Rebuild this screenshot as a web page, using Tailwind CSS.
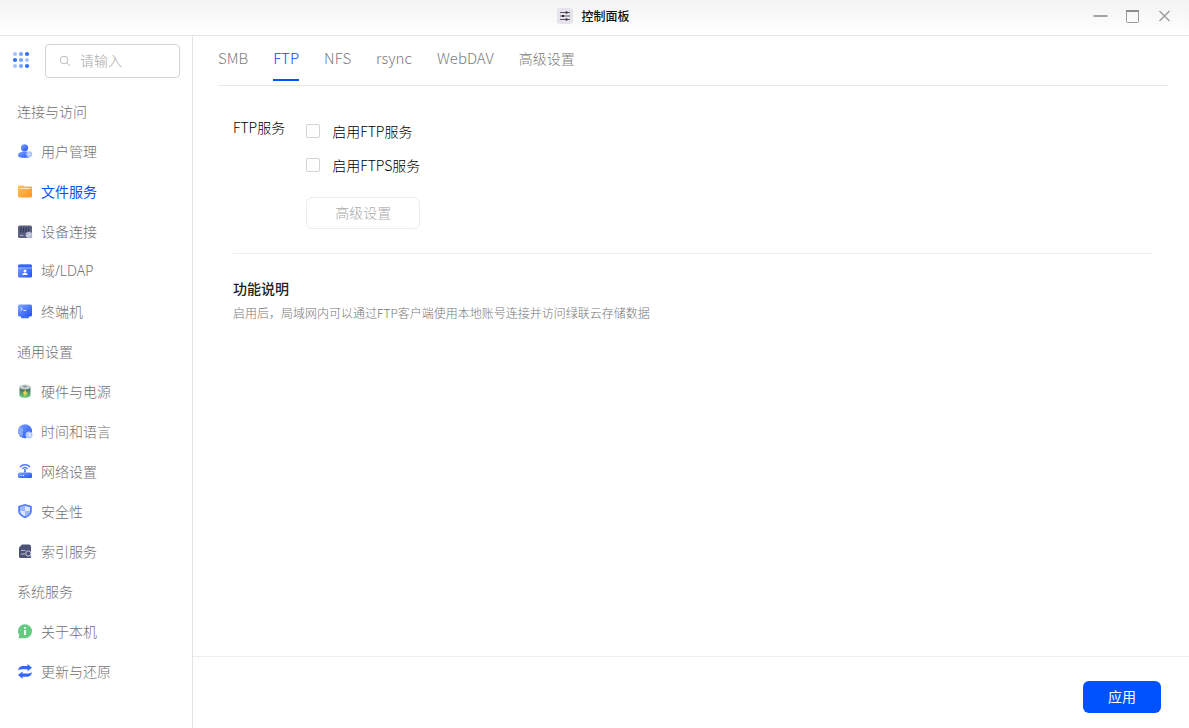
<!DOCTYPE html>
<html lang="zh-CN">
<head>
  <meta charset="UTF-8" />
  <meta name="viewport" content="width=device-width, initial-scale=1.0"/>
  <title>控制面板</title>
  <script src="https://cdn.jsdelivr.net/npm/@tailwindcss/browser@4"></script>
</head>
<body class="h-screen flex flex-col overflow-hidden bg-white font-['Noto_Sans_CJK_SC',sans-serif] font-light text-sm text-black">
  <!-- Gradientes dos ícones -->
  <svg class="absolute w-0 h-0" aria-hidden="true">
    <defs>
      <linearGradient id="blue" x1="0" y1="0" x2="1" y2="1"><stop offset="0" stop-color="#7fa8ff"/><stop offset="1" stop-color="#1f4dff"/></linearGradient>
      <linearGradient id="orange" x1="0" y1="0" x2="1" y2="1"><stop offset="0" stop-color="#ffc05a"/><stop offset="1" stop-color="#ff9420"/></linearGradient>
      <linearGradient id="green" x1="0" y1="0" x2="0" y2="1"><stop offset="0" stop-color="#3c5a60"/><stop offset="1" stop-color="#6fd07a"/></linearGradient>
    </defs>
  </svg>

  <header class="h-9 shrink-0 grid grid-cols-3 items-center border-b border-[#e4e4e4] bg-linear-to-b from-[#f3f3f3] to-white">
    <span></span>
    <div class="flex items-center justify-center gap-2 pb-1 pr-0.5">
      <svg class="w-4 h-4" viewBox="0 0 16 16"><rect width="16" height="16" rx="3" fill="#e6e4ea"/><path d="M3 4.500h10M3 8h10M3 11.500h10" stroke="#5a5767"/><path d="M9.500 3.500v2M6 7v2M9.500 10.500v2" stroke="#2b2838" stroke-width="2"/></svg>
      <h1 class="text-xs font-medium text-[#111]">控制面板</h1>
    </div>
    <div class="flex justify-end gap-4 pb-1 pr-[17px]">
      <button aria-label="最小化"><svg class="w-4 h-4" viewBox="0 0 16 16"><path d="M1.500 8h14" stroke="#a3a3a3" stroke-width="2"/></svg></button>
      <button aria-label="最大化"><svg class="w-4 h-4" viewBox="0 0 16 16" fill="none"><rect x="2.500" y="2.500" width="12" height="12" rx="1" stroke="#999"/><path d="M2 3h13" stroke="#8c8c8c" stroke-width="2"/></svg></button>
      <button aria-label="关闭"><svg class="w-4 h-4" viewBox="0 0 16 16"><path d="M3.500 3l10 10M13.500 3l-10 10" stroke="#999" stroke-width="1.300"/></svg></button>
    </div>
  </header>

  <div class="flex flex-1 min-h-0">
    <!-- Menu lateral -->
    <aside class="w-[193px] shrink-0 border-r border-[#e4e4e4] pt-2 text-[#707070]">
      <div class="flex items-center gap-4 px-3 mb-[13px]">
        <button aria-label="全部应用" class="w-[17px] shrink-0 pb-0.5">
          <svg class="w-[18px] h-[18px]" viewBox="0 0 18 18"><g fill="#2f70ff"><circle cx="15" cy="3" r="2.100"/><circle cx="3" cy="9" r="2.100"/><circle cx="15" cy="15" r="2.100"/></g><g fill="#77a3ff"><circle cx="9" cy="3" r="2.100"/><circle cx="9" cy="9" r="2.100"/><circle cx="9" cy="15" r="2.100"/></g><g fill="#a9c5ff"><circle cx="3" cy="3" r="2.100"/><circle cx="15" cy="9" r="2.100"/><circle cx="3" cy="15" r="2.100"/></g></svg>
        </button>
        <label class="flex items-center gap-[7px] flex-1 min-w-0 h-[34px] border border-[#d4d4d4] rounded px-[11px] pb-0.5">
          <svg class="w-4 h-4 shrink-0" viewBox="0 0 16 16" fill="none" stroke="#bbb"><circle cx="7" cy="8" r="3.800"/><path d="M10 11l3 3"/></svg>
          <input type="search" aria-label="搜索" placeholder="请输入" class="w-full min-w-0 outline-none placeholder:text-[#aaa]">
        </label>
      </div>
      <nav class="leading-10">
        <h2 class="pl-[17px]">连接与访问</h2>
        <a href="#" class="flex items-center gap-2 pl-[17px]"><svg class="w-4 h-4" viewBox="0 0 16 16"><circle cx="7.500" cy="4.800" r="3.600" fill="url(#blue)"/><path d="M1 12.500c0-3 3-4 6.500-4s6.500 1 6.500 4c0 1.500-3 2.300-6.500 2.300S1 14 1 12.500z" fill="url(#blue)"/><circle cx="12.200" cy="11.200" r="3" fill="#a9c2ff"/><circle cx="12.200" cy="11.200" r="1" fill="#e9f0ff"/></svg>用户管理</a>
        <a href="#" aria-current="page" class="flex items-center gap-2 pl-[17px] font-normal text-[#0052ff]"><svg class="w-4 h-4" viewBox="0 0 16 16"><path d="M1 3.500a1 1 0 011-1h4l1.500 1H14a1 1 0 011 1V13a1.500 1.500 0 01-1.500 1.500h-11A1.500 1.500 0 011 13z" fill="url(#orange)"/><path d="M2.500 5.500h11" stroke="#ffe6c0" stroke-width="1"/></svg>文件服务</a>
        <a href="#" class="flex items-center gap-2 pl-[17px]"><svg class="w-4 h-4" viewBox="0 0 16 16"><rect x="1" y="2.500" width="14" height="12.500" rx="1.500" fill="#5a6080"/><path d="M4 4.500v5M6.500 4.500v5M9 4.500v5M11.500 4.500v4" stroke="#343a58" stroke-width="1.300"/><path d="M2.500 12.500h4" stroke="#9da3bd"/><circle cx="12" cy="12" r="3.300" fill="#b4bad0"/><path d="M10.500 13.500l3-3" stroke="#eef0f6"/></svg>设备连接</a>
        <a href="#" class="flex items-center gap-2 pl-[17px] font-['Noto_Sans','Noto_Sans_CJK_SC',sans-serif]"><svg class="w-4 h-4" viewBox="0 0 16 16"><rect x="1" y="1.500" width="14" height="13" rx="1.500" fill="url(#blue)"/><path d="M1 3a1.500 1.500 0 011.500-1.500h11A1.500 1.500 0 0115 3v1.500H1z" fill="#3565ff"/><path d="M1 5h14" stroke="#bdd0ff" stroke-width=".7"/><circle cx="8" cy="8" r="1.500" fill="#fff"/><path d="M5.200 12c0-1.500 1.300-2 2.800-2s2.800.500 2.800 2z" fill="#fff"/></svg>域/LDAP</a>
        <a href="#" class="flex items-center gap-2 pl-[17px]"><svg class="w-4 h-4" viewBox="0 0 16 16"><rect x="1" y="1.500" width="14" height="12" rx="1.500" fill="url(#blue)"/><path d="M4 13h8v1.200a1 1 0 01-1 1H5a1 1 0 01-1-1z" fill="#3d6bff"/><path d="M3.500 4.500l2 1.500-2 1.500M6.500 7.500H9" stroke="#dce6ff" fill="none"/></svg>终端机</a>
        <h2 class="pl-[17px]">通用设置</h2>
        <a href="#" class="flex items-center gap-2 pl-[17px]"><svg class="w-4 h-4" viewBox="0 0 16 16"><path d="M2.500 4v8.500c0 3 11 3 11 0V4z" fill="url(#green)"/><ellipse cx="8" cy="4" rx="5.700" ry="2.600" fill="#c9cfcf"/><ellipse cx="8" cy="3.500" rx="2" ry=".9" fill="#8c9797"/><path d="M9 6.500L5.500 10.500h2.200l-.5 3.200L10.700 9.500H8.500z" fill="#ffe34d"/></svg>硬件与电源</a>
        <a href="#" class="flex items-center gap-2 pl-[17px]"><svg class="w-4 h-4" viewBox="0 0 16 16"><circle cx="8" cy="8.300" r="7" fill="url(#blue)"/><path d="M2 5c3-1 5 1 4 3s1 3-1 5.500C1.500 12 0 8 2 5z" fill="#86aaff"/><circle cx="12" cy="12" r="3.500" fill="#b5cbff"/><path d="M12 10v2l1.500 1" stroke="#fff" fill="none"/></svg>时间和语言</a>
        <a href="#" class="flex items-center gap-2 pl-[17px]"><svg class="w-4 h-4" viewBox="0 0 16 16"><rect x="1" y="9.500" width="14" height="5.500" rx="1.500" fill="url(#blue)"/><path d="M3.500 12.500h1M6 12.500h1" stroke="#fff"/><path d="M8 6v3.500" stroke="#2f5cff" stroke-width="1.500"/><path d="M3 4c2.800-3 7.200-3 10 0M5.300 5.800c1.600-1.600 3.800-1.600 5.400 0" stroke="#4c78ff" stroke-width="1.500" fill="none"/></svg>网络设置</a>
        <a href="#" class="flex items-center gap-2 pl-[17px]"><svg class="w-4 h-4" viewBox="0 0 16 16"><path d="M8 1l6.800 2v5c0 3.500-3.500 6-6.800 7.200C4.700 14 1.200 11.500 1.200 8V3z" fill="#527cff"/><path d="M8 2.800l5 1.500V8c0 2.500-2.500 4.300-5 5.300C5.500 12.300 3 10.500 3 8V4.300z" fill="#dbe6ff"/><path d="M8 2.800V8H3V4.300zM8 8h5c0 2.500-2.500 4.300-5 5.300z" fill="#9ab6ff"/></svg>安全性</a>
        <a href="#" class="flex items-center gap-2 pl-[17px]"><svg class="w-4 h-4" viewBox="0 0 16 16"><path d="M5 1.500h7a2 2 0 012 2V15H3.500A1.500 1.500 0 012 13.500V4.500z" fill="#4c5377"/><path d="M4 7.500h4.500M4 11h4" stroke="#b4bad0"/><circle cx="11.300" cy="10.500" r="2.600" fill="#4c5377" stroke="#c9cee0"/><path d="M13 12.500l1.800 1.800" stroke="#c9cee0"/></svg>索引服务</a>
        <h2 class="pl-[17px]">系统服务</h2>
        <a href="#" class="flex items-center gap-2 pl-[17px]"><svg class="w-4 h-4" viewBox="0 0 16 16"><path d="M8 1.300a7 7 0 110 14H1.500l.8-3A7 7 0 018 1.300z" fill="#65cb80"/><path d="M8 4v1.800M8 7v5" stroke="#fff" stroke-width="1.800"/></svg>关于本机</a>
        <a href="#" class="flex items-center gap-2 pl-[17px]"><svg class="w-4 h-4" viewBox="0 0 16 16"><path d="M1 7.500C1.500 4.300 3.500 3 6 3h4.500V1L15 4.700 10.500 8.300V6.300H6c-2 0-3.500.200-5 1.200z" fill="#3566ff"/><path d="M15 9.200c-.5 3.200-2.500 4.500-5 4.500H5.500v2L1 12l4.500-3.600v2H10c2 0 3.500-.2 5-1.200z" fill="#3566ff"/></svg>更新与还原</a>
      </nav>
    </aside>

    <!-- Conteúdo principal -->
    <div class="flex-1 min-w-0 flex flex-col">
      <main class="flex-1 pl-[25px] pr-[21px]">
        <nav class="flex gap-[25px] h-[50px] border-b border-[#e8e8e8] text-[15px] leading-11 text-[#7c7c7c]">
          <a href="#">SMB</a>
          <a href="#" aria-current="page" class="h-[45px] border-b-2 border-[#0052ff] text-[#0052ff]">FTP</a>
          <a href="#">NFS</a>
          <a href="#">rsync</a>
          <a href="#">WebDAV</a>
          <a href="#" class="text-sm leading-11">高级设置</a>
        </nav>

        <div class="mr-4 ml-[15px]">
          <fieldset class="flex gap-[21px] pt-[31px] pb-6 border-b border-[#ececec]">
            <span class="leading-5">FTP服务</span>
            <div class="flex flex-col items-start gap-3.5 pt-1">
              <label class="flex items-center gap-3 leading-5"><input type="checkbox" class="appearance-none w-3.5 h-3.5 border border-[#d4d4d4] rounded-xs">启用FTP服务</label>
              <label class="flex items-center gap-3 leading-5"><input type="checkbox" class="appearance-none w-3.5 h-3.5 border border-[#d4d4d4] rounded-xs">启用FTPS服务</label>
              <button disabled class="mt-2 h-8 px-7 pb-0.5 border border-[#ececec] rounded-md text-[#aaa]">高级设置</button>
            </div>
          </fieldset>
          <h2 class="mt-[22px] leading-6 font-medium text-[#222]">功能说明</h2>
          <p class="mt-[3px] text-xs leading-5 text-[#777]">启用后，局域网内可以通过FTP客户端使用本地账号连接并访问绿联云存储数据</p>
        </div>
      </main>

      <footer class="h-[72px] shrink-0 flex justify-end items-start border-t border-[#ececec] pt-6 pr-7">
        <button class="h-8 w-[78px] pb-0.5 rounded-md bg-[#0052ff] text-white font-normal">应用</button>
      </footer>
    </div>
  </div>
</body>
</html>
